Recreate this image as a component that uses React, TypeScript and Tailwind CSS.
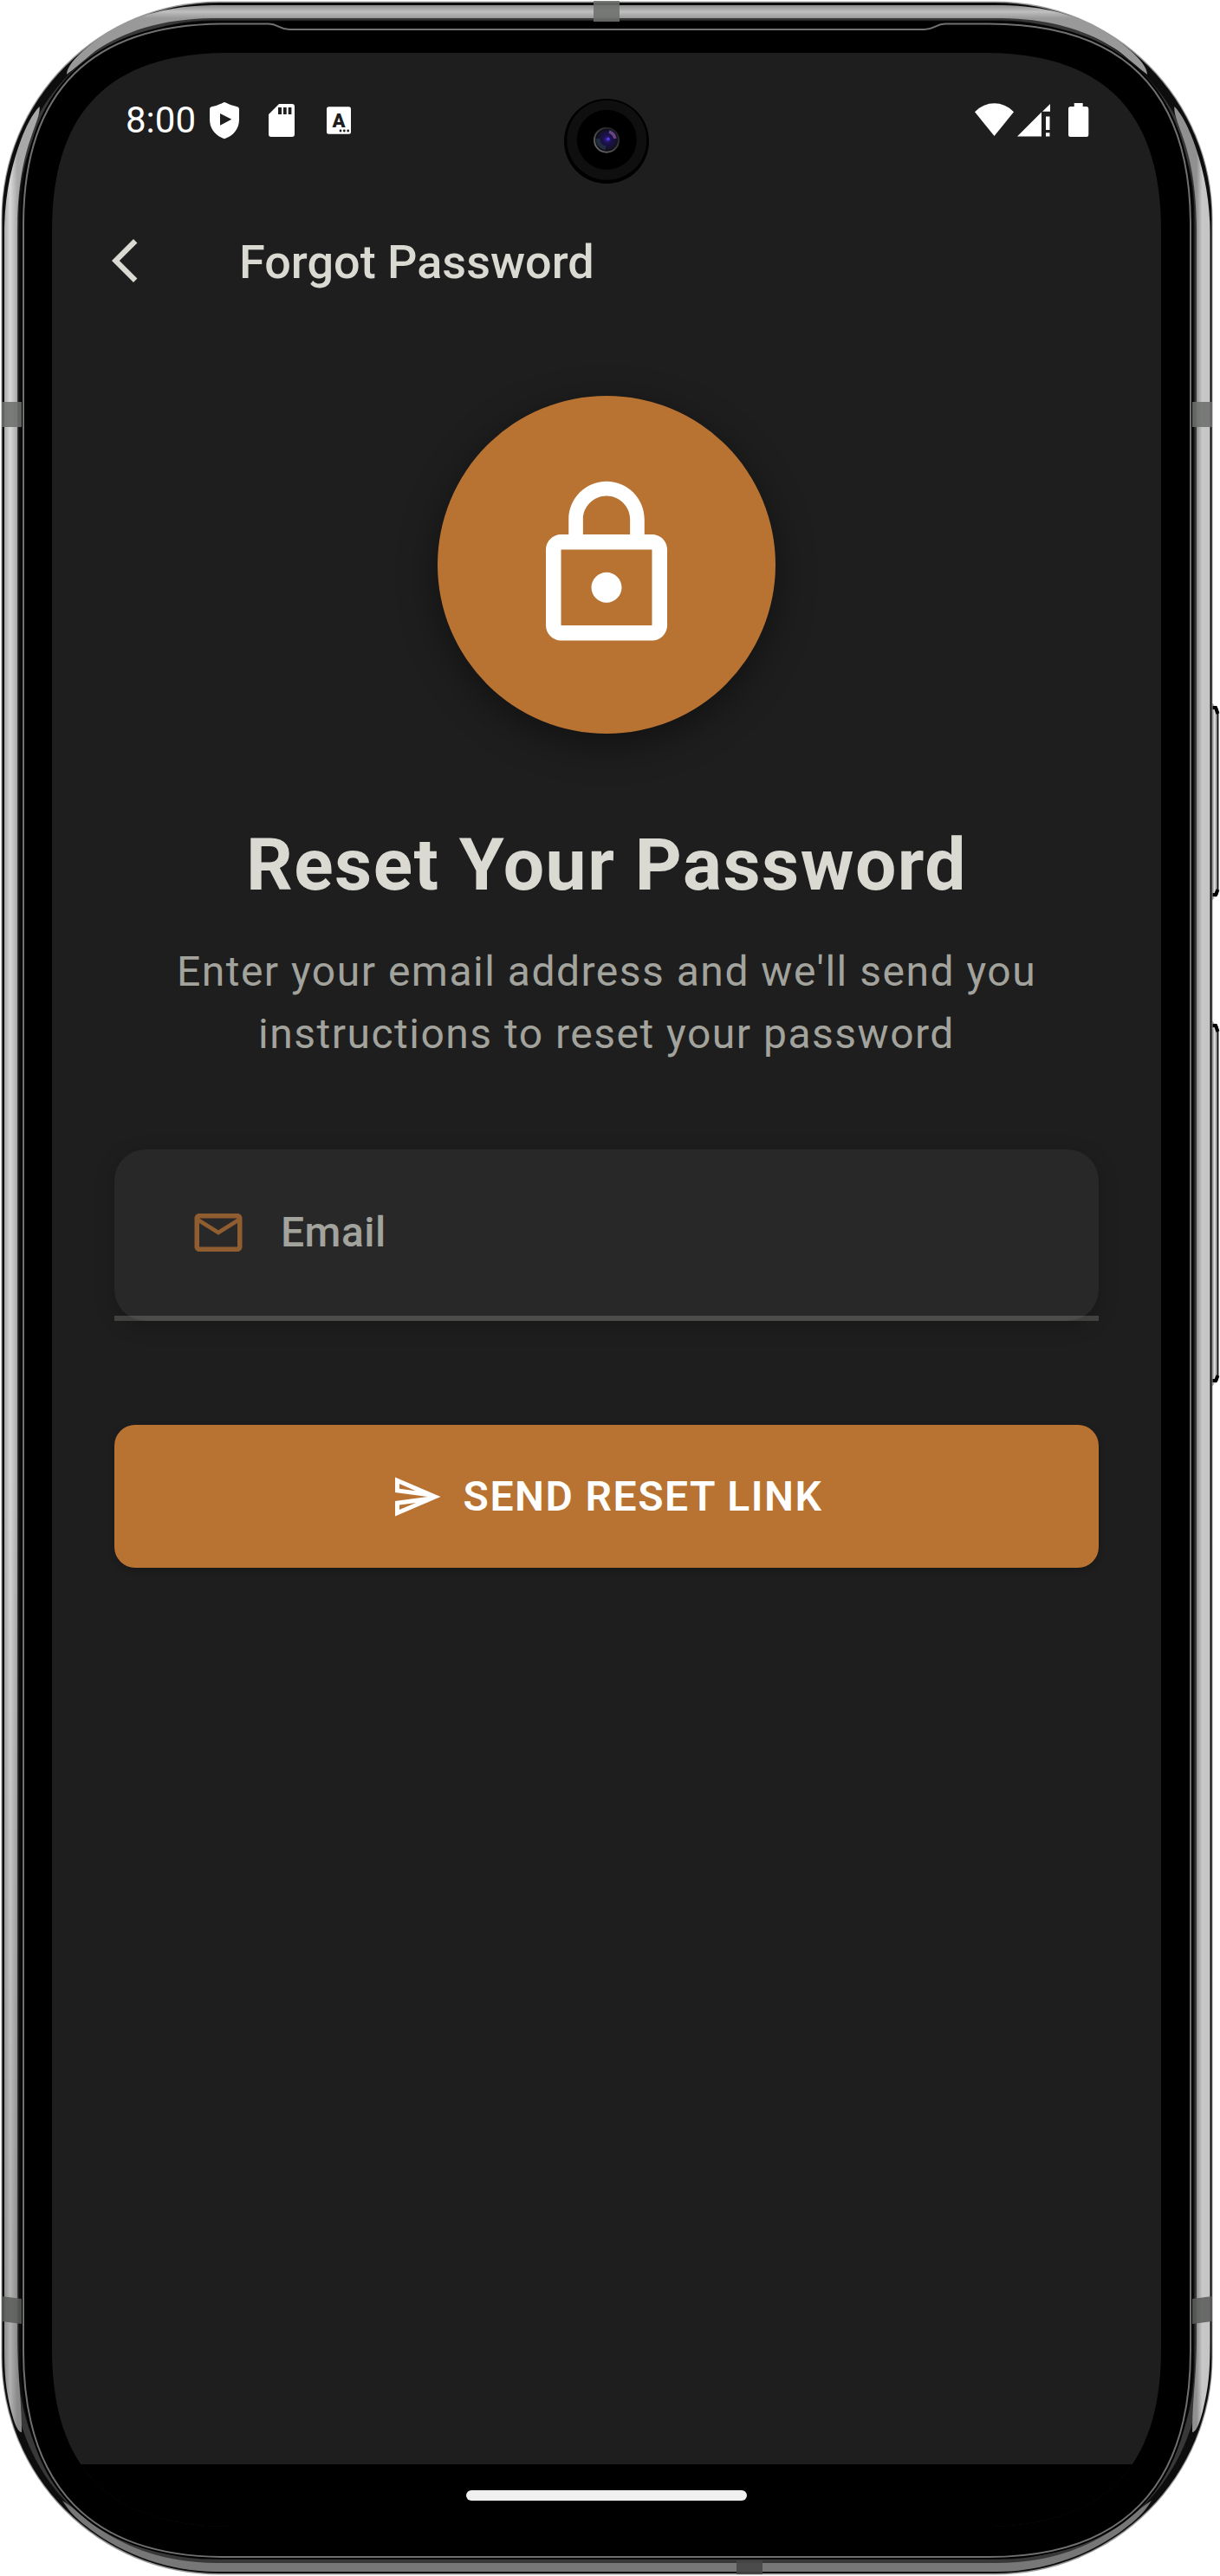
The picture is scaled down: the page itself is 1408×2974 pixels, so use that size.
import React from "react";

const TOP_BAND =
  "M77 86C77 78 86 67 98 57C135 25 180 7 245 6H1156C1221 7 1266 25 1303 57C1315 67 1324 78 1324 86C1316 80 1306 71 1291 59C1257 36 1216 22 1156 21H245C185 22 144 36 110 59C95 71 85 80 77 86Z";
const BOTTOM_BAND =
  "M72 2887C88 2897 96 2907 112 2918C150 2943 190 2958 250 2959H1151C1211 2958 1251 2943 1289 2918C1305 2907 1313 2897 1329 2887C1320 2902 1309 2911 1297 2920C1259 2949 1205 2969 1151 2969H250C196 2969 142 2949 104 2920C92 2911 81 2902 72 2887Z";
const LEFT_BAND =
  "M45.500 123C47 130 41 143 36 158C26 186 20 220 20 268V2700C20 2742 25 2770 25 2808C20 2808 16 2795 13 2784C6 2755 5 2740 5 2700V268C5 225 14 189 24 162C30 146 37 132 45.500 123Z";
const RIGHT_BAND =
  "M1355.500 123C1354 130 1360 143 1365 158C1375 186 1381 220 1381 268V2700C1381 2742 1376 2770 1376 2808C1381 2808 1385 2795 1388 2784C1395 2755 1396.500 2740 1396.500 2700V268C1396.500 225 1387 189 1377 162C1371 146 1364 132 1355.500 123Z";
const INNER_RIM =
  "M27 2714V260C27 105 105 27.500 260 27.500H310C321 27.500 322 34 334 34H1067C1079 34 1080 27.500 1091 27.500H1141C1296 27.500 1374 105 1374 260V2714C1374 2871 1296 2952 1141 2952H260C105 2952 27 2871 27 2714Z";

function SideKey({ top, bottom }: { top: number; bottom: number }) {
  return (
    <g filter="url(#soft)">
      <path
        d={`M1397 ${top}L1404 ${top + 6}Q1406.500 ${top + 8} 1406.500 ${top + 14}V${bottom - 14}Q1406.500 ${bottom - 8} 1404 ${bottom - 6}L1397 ${bottom}Z`}
        fill="url(#key)"
      />
      <path
        d={`M1399 ${top + 7}H1403L1405.500 ${top + 14}M1399 ${bottom - 8}H1403L1405.500 ${bottom - 14}`}
        stroke="#000"
        strokeWidth="4"
      />
    </g>
  );
}

function DeviceFrame() {
  return (
    <svg className="absolute inset-0" width="1408" height="2974" viewBox="0 0 1408 2974" fill="none">
      <defs>
        <linearGradient id="top" x1="0" y1="6" x2="0" y2="21" gradientUnits="userSpaceOnUse">
          <stop offset="0" stopColor="#8c8c8c" />
          <stop offset=".5" stopColor="#bfbfbf" />
          <stop offset="1" stopColor="#999" />
        </linearGradient>
        <linearGradient id="left" x1="5" y1="0" x2="20" y2="0" gradientUnits="userSpaceOnUse">
          <stop offset="0" stopColor="#aaa" />
          <stop offset=".45" stopColor="#d8d8d8" />
          <stop offset="1" stopColor="#a8a8a8" />
        </linearGradient>
        <linearGradient id="right" x1="1381" y1="0" x2="1397" y2="0" gradientUnits="userSpaceOnUse">
          <stop offset="0" stopColor="#909090" />
          <stop offset=".4" stopColor="#c8c8c8" />
          <stop offset="1" stopColor="#c4c4c4" />
        </linearGradient>
        <linearGradient id="shade" x1="0" y1="1700" x2="0" y2="2700" gradientUnits="userSpaceOnUse">
          <stop offset="0" stopColor="#000" stopOpacity="0" />
          <stop offset="1" stopColor="#000" stopOpacity=".18" />
        </linearGradient>
        <linearGradient id="key" x1="1399" y1="0" x2="1407" y2="0" gradientUnits="userSpaceOnUse">
          <stop offset="0" stopColor="#777" />
          <stop offset=".3" stopColor="#e0e0e0" />
          <stop offset=".6" stopColor="#aaa" />
          <stop offset=".8" stopColor="#111" />
          <stop offset="1" stopColor="#444" />
        </linearGradient>
        <filter id="soft" x="-10%" y="-10%" width="120%" height="120%">
          <feGaussianBlur stdDeviation=".7" />
        </filter>
      </defs>

      <SideKey top={810} bottom={1041} />
      <SideKey top={1177} bottom={1602} />

      <g filter="url(#soft)">
        <rect x="1.500" y="1.500" width="1398" height="2971" rx="251" fill="#9a9a9a" />
        <rect x="2.500" y="3" width="1396" height="2968" rx="250" fill="#111" />
        <rect x="18" y="20" width="1364" height="2938" rx="226" stroke="#383838" strokeWidth="7" />
      </g>
      <g filter="url(#soft)">
        <path d={TOP_BAND} fill="url(#top)" />
        <path d={BOTTOM_BAND} fill="#777" />
        <path d={LEFT_BAND} fill="url(#left)" />
        <path d={LEFT_BAND} fill="url(#shade)" />
        <path d={RIGHT_BAND} fill="url(#right)" />
      </g>
      <path
        d="M24 2714V260C24 103 103 24.500 260 24.500H1141C1298 24.500 1377 103 1377 260V2714C1377 2873 1298 2954.500 1141 2954.500H260C103 2954.500 24 2873 24 2714Z"
        fill="#000"
      />
      <path d={INNER_RIM} stroke="#707070" strokeWidth="2" />

      <g fill="#6c6f6c" opacity=".88">
        <rect x="685" y="1" width="30" height="24" />
        <rect x="850" y="2956" width="30" height="16" fill="#444644" />
        <path d="M2 464H25V493H2Z" />
        <path d="M1376 464H1399V493H1376Z" />
        <path d="M2 2651L25 2654V2683L2 2680Z" fill="#5a5d5a" />
        <path d="M1399 2651L1376 2654V2683L1399 2680Z" fill="#5a5d5a" />
      </g>
    </svg>
  );
}

function Camera() {
  return (
    <svg className="absolute left-[651px] top-[114px]" width="98" height="98" viewBox="651 114 98 98">
      <defs>
        <radialGradient id="lens" cx="701" cy="161" r="13" gradientUnits="userSpaceOnUse">
          <stop offset="0" stopColor="#3a28a0" />
          <stop offset=".35" stopColor="#1c1250" />
          <stop offset=".8" stopColor="#15122c" />
          <stop offset="1" stopColor="#0c0c14" />
        </radialGradient>
        <linearGradient id="rim" x1="690" y1="174" x2="710" y2="150" gradientUnits="userSpaceOnUse">
          <stop offset="0" stopColor="#666" />
          <stop offset="1" stopColor="#1c1c1c" />
        </linearGradient>
      </defs>
      <circle cx="700" cy="163" r="49" fill="#000" />
      <circle cx="700.300" cy="161.800" r="46" fill="#0f0f0f" />
      <circle cx="700.300" cy="161.300" r="34.500" fill="#000" />
      <circle cx="700" cy="161.700" r="14" fill="url(#lens)" stroke="url(#rim)" strokeWidth="2" />
      <path d="M690 160A10.500 10.500 0 0 0 699 171" stroke="#2c4050" strokeWidth="5" fill="none" opacity=".6" />
      <path d="M703 152A11 11 0 0 1 710 160" stroke="#8a5aa4" strokeWidth="3.500" fill="none" opacity=".7" />
      <circle cx="702" cy="160.500" r="1.700" fill="#5a3cf0" />
    </svg>
  );
}

function StatusBar() {
  return (
    <div className="flex h-[100px] shrink-0 items-end justify-between pl-[85px] pr-[83px]">
      <div className="flex h-[44px] items-center">
        <span className="mt-[-1px] w-[97px] text-[42px] leading-[44px] text-white">8:00</span>
        <svg width="34" height="44" viewBox="242 117 34 44" fill="#fff">
          <path
            fillRule="evenodd"
            d="M257.500 118.400Q259 117.700 260.500 118.400Q266 121.600 274 123.200Q276 123.600 276 126V138C276 149 269 157 259 160.200C249 157 242 149 242 138V126Q242 123.600 244 123.200Q252 121.600 257.500 118.400ZM254 131V144.700L267.300 137.800Z"
          />
        </svg>
        <svg className="ml-[34px]" width="30" height="44" viewBox="310 117 30 44" fill="#fff">
          <path
            fillRule="evenodd"
            d="M322 120H337Q340 120 340 123V155Q340 158 337 158H313Q310 158 310 155V132ZM321 124V132H325V124ZM327 124V132H330.700V124ZM332.700 124V132H336.400V124Z"
          />
        </svg>
        <svg className="ml-[37px]" width="28" height="44" viewBox="377 117 28 44">
          <rect x="377" y="123.300" width="28" height="31.500" rx="2.500" fill="#fff" />
          <text x="391" y="146.700" textAnchor="middle" fontSize="22" fontWeight="900" className="font-['Roboto',sans-serif]" fill="#1e1e1e">A</text>
          <circle cx="393" cy="151" r="1.400" fill="#1e1e1e" />
          <circle cx="397.300" cy="151" r="1.400" fill="#1e1e1e" />
          <circle cx="401.700" cy="151" r="1.400" fill="#1e1e1e" />
        </svg>
      </div>
      <svg width="132" height="44" viewBox="1125 117 132 44" fill="#fff">
        <path d="M1125 129.300C1138 116 1157 116 1170 129.300L1147.500 157Z" />
        <path d="M1174 157.600L1202 129.500V157.600ZM1203 128.700L1212 120V128.700ZM1207 134.500H1211.500V150H1207ZM1207 153.300H1211.500V157.600H1207Z" />
        <path d="M1239.700 119H1249.700V123H1254Q1256.300 123 1256.300 125.500V155.500Q1256.300 158 1254 158H1235.500Q1233 158 1233 155.500V125.500Q1233 123 1235.500 123H1239.700Z" />
      </svg>
    </div>
  );
}

export default function App() {
  return (
    <div className="relative h-[2974px] w-[1408px] overflow-hidden bg-white font-['Roboto',sans-serif]">
      <DeviceFrame />
      <div className="relative pl-[60px] pt-[61px]">
        <div className="flex h-[2856px] w-[1280px] flex-col overflow-hidden bg-[#1e1e1e] [clip-path:path('M0_205C0_67_67_0_205_0H1075C1213_0_1280_67_1280_205V2651C1280_2789_1213_2856_1075_2856H205C67_2856_0_2789_0_2651Z')]">
          <StatusBar />
          <header className="mt-[56px] flex h-[168px] shrink-0 items-center pl-[54px]">
            <svg width="60" height="60" viewBox="0 0 24 24" fill="#dadad2">
              <path d="M17.770 3.770L16 2 6 12l10 10 1.770-1.770L9.540 12z" />
            </svg>
            <h1 className="ml-[102px] pt-[3px] text-[54px] font-medium leading-[64px] text-[#dadad2]">Forgot Password</h1>
          </header>
          <main className="flex flex-1 flex-col items-center px-[72px] pt-[72px]">
            <div className="flex size-[390px] shrink-0 items-center justify-center rounded-full bg-[#b87333] shadow-[0_12px_45px_rgba(0,0,0,0.42)]">
              <svg width="210" height="210" viewBox="0 0 24 24" fill="#fff">
                <path d="M12 17c1.100 0 2-.9 2-2s-.9-2-2-2-2 .9-2 2 .9 2 2 2zm6-9h-1V6c0-2.760-2.240-5-5-5S7 3.240 7 6v2H6c-1.100 0-2 .9-2 2v10c0 1.100.9 2 2 2h12c1.100 0 2-.9 2-2V10c0-1.100-.9-2-2-2zM8.900 6c0-1.710 1.390-3.100 3.100-3.100s3.100 1.390 3.100 3.100v2H8.900V6zM18 20H6V10h12v10z" />
              </svg>
            </div>
            <h2 className="mt-[102px] whitespace-nowrap text-[84px] font-bold leading-[100px] tracking-[1.5px] text-[#dadad2]">
              Reset Your Password
            </h2>
            <p className="mt-[37px] whitespace-nowrap text-center text-[48px] leading-[72px] tracking-[1.5px] text-[#a3a39d]">
              Enter your email address and we'll send you
              <br />
              instructions to reset your password
            </p>
            <label className="relative mt-[97px] flex h-[198px] w-full items-center rounded-[36px] bg-[#282828] pb-[6px] pl-[87px] shadow-[0_6px_24px_rgba(0,0,0,0.2)]">
              <svg width="66" height="66" viewBox="0 0 24 24" fill="#8f5d30">
                <path d="M22 6c0-1.100-.9-2-2-2H4c-1.100 0-2 .9-2 2v12c0 1.100.9 2 2 2h16c1.100 0 2-.9 2-2V6zm-2 0l-8 5-8-5h16zm0 12H4V8l8 5 8-5v10z" />
              </svg>
              <span className="ml-[39px] text-[48px] font-medium leading-[56px] tracking-[0.5px] text-[#a3a39d]">Email</span>
              <span className="absolute inset-x-0 bottom-0 h-[6px] bg-[#dadad2]/20" />
            </label>
            <button className="mt-[120px] flex h-[165px] w-full items-center justify-center gap-[24px] rounded-[24px] bg-[#b87333] shadow-[0_3px_9px_rgba(0,0,0,0.2)]">
              <svg width="60" height="60" viewBox="0 0 24 24" fill="#fff">
                <path d="M4.010 6.030l7.510 3.220-7.520-1 .01-2.220m7.500 8.720L4 17.970v-2.220l7.510-1M2.010 3L2 10l15 2-15 2 .01 7L23 12 2.010 3z" />
              </svg>
              <span className="text-[48px] font-semibold leading-[56px] tracking-[1.5px] text-white">SEND RESET LINK</span>
            </button>
          </main>
          <nav className="flex h-[72px] shrink-0 items-center justify-center bg-black">
            <div className="h-[12px] w-[324px] rounded-full bg-[#f0f0f0]" />
          </nav>
        </div>
      </div>
      <Camera />
    </div>
  );
}
